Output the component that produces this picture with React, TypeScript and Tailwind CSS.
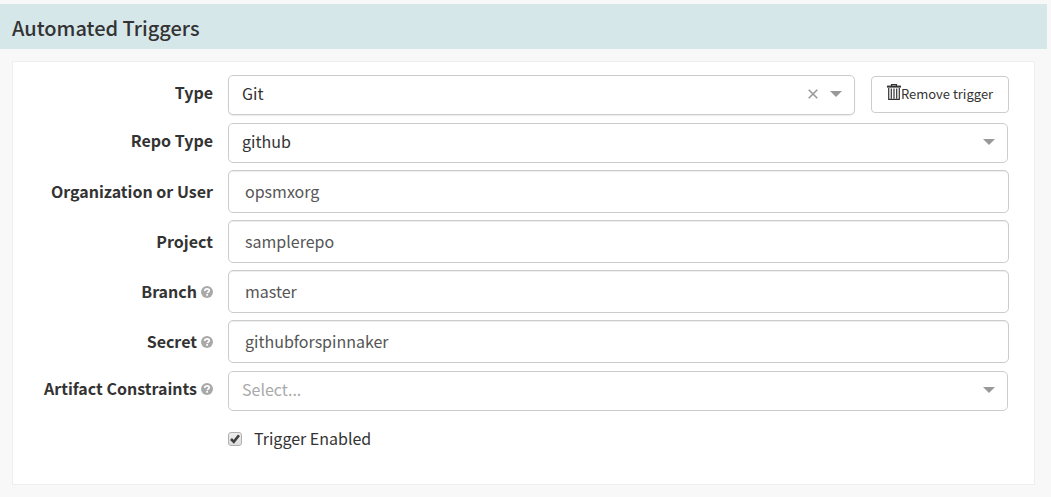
import React, { useState } from "react";

const fieldBox =
  "w-full rounded-[5px] border border-[#ccc] bg-white outline-none";

function HelpIcon() {
  return (
    <svg viewBox="0 0 12 12" className="mt-0.5 size-3 shrink-0" aria-hidden="true">
      <circle cx="6" cy="6" r="6" fill="#a9a9a9" />
      <path
        d="M3.7 4.9C3.7 3.4 4.7 2.8 6 2.8s2.3.6 2.3 1.8c0 1.3-1.9 1.3-1.9 2.7"
        fill="none"
        stroke="#fff"
        strokeWidth="1.7"
      />
      <rect x="5.2" y="8" width="1.8" height="1.7" fill="#fff" />
    </svg>
  );
}

function TrashIcon() {
  return (
    <svg viewBox="0 0 14 17" className="h-[17px] w-3.5 shrink-0" aria-hidden="true">
      <path d="M4.5 2V.6h5V2" fill="none" stroke="#333" strokeWidth="1.2" />
      <rect x="0" y="1.6" width="14" height="2" fill="#333" />
      <path
        d="M1.7 4v11.4h10.6V4M4.3 4.5v10M7 4.5v10M9.7 4.5v10"
        fill="none"
        stroke="#333"
        strokeWidth="1.2"
      />
    </svg>
  );
}

function Caret() {
  return (
    <svg
      viewBox="0 0 12 6"
      className="pointer-events-none absolute top-4 right-[13px] h-1.5 w-3"
      aria-hidden="true"
    >
      <path d="M0 0h12L6 6z" fill="#999" />
    </svg>
  );
}

function Row({
  id,
  label,
  help,
  children,
}: {
  id: string;
  label: string;
  help?: boolean;
  children: React.ReactNode;
}) {
  return (
    <div className="grid grid-cols-[200px_1fr] gap-[15px]">
      <label
        htmlFor={id}
        className="flex h-[34px] items-center justify-end gap-1 font-bold whitespace-nowrap"
      >
        {label}
        {help && <HelpIcon />}
      </label>
      {children}
    </div>
  );
}

function TextRow({
  id,
  label,
  help,
  initial,
}: {
  id: string;
  label: string;
  help?: boolean;
  initial: string;
}) {
  const [value, setValue] = useState(initial);
  return (
    <div className="-mt-px grid grid-cols-[200px_1fr] items-center gap-[15px]">
      <label
        htmlFor={id}
        className="flex items-center justify-end gap-1 pb-0.5 font-bold whitespace-nowrap"
      >
        {label}
        {help && <HelpIcon />}
      </label>
      <input
        id={id}
        type="text"
        value={value}
        onChange={(e) => setValue(e.target.value)}
        className={`${fieldBox} h-[43px] px-4 pb-0.5 text-[#555] shadow-[inset_0_1px_1px_rgba(0,0,0,0.075)]`}
      />
    </div>
  );
}

export default function App() {
  const [type, setType] = useState("Git");
  const [enabled, setEnabled] = useState(true);
  return (
    <div className="min-h-screen bg-[#f8f8f8] pt-1 pr-1 pb-3 font-['Noto_Sans_CJK_JP','Noto_Sans_CJK_SC',sans-serif] text-base leading-6 text-[#333]">
      <header className="flex h-[45px] items-center bg-[#d6e7ea] px-3 pt-0.5">
        <h2 className="text-xl leading-7 font-medium">Automated Triggers</h2>
      </header>
      <form className="mt-3 mr-3 ml-3 flex flex-col gap-2 border border-[#eee] bg-white pt-[13px] pr-[25px] pb-8">
        <Row id="type" label="Type">
          <div className="flex items-start gap-4">
            <div className="relative flex-1">
              <select
                id="type"
                value={type}
                onChange={(e) => setType(e.target.value)}
                className={`${fieldBox} h-10 appearance-none px-[13px] pb-1 shadow-[0_1px_1px_rgba(0,0,0,0.08)]`}
              >
                <option value=""></option>
                <option>Git</option>
              </select>
              <button
                type="button"
                aria-label="Clear type"
                onClick={() => setType("")}
                className="absolute top-3.5 right-[37px]"
              >
                <svg viewBox="0 0 10 10" className="size-2.5">
                  <path d="M.7.7l8.6 8.6M9.3.7L.7 9.3" stroke="#999" strokeWidth="1.6" />
                </svg>
              </button>
              <Caret />
            </div>
            <button
              type="button"
              className="mt-px flex h-[37px] w-[138px] items-center justify-center rounded-[4px] border border-[#ccc] bg-white pb-1 text-[13px] whitespace-nowrap"
            >
              <TrashIcon />
              <span className="pt-0.5">Remove trigger</span>
            </button>
          </div>
        </Row>
        <Row id="repo-type" label="Repo Type">
          <div className="relative mr-px">
            <select
              id="repo-type"
              defaultValue="github"
              className={`${fieldBox} h-10 appearance-none px-[13px] pb-1`}
            >
              <option>github</option>
            </select>
            <Caret />
          </div>
        </Row>
        <TextRow id="org" label="Organization or User" initial="opsmxorg" />
        <TextRow id="project" label="Project" initial="samplerepo" />
        <TextRow id="branch" label="Branch" help initial="master" />
        <TextRow id="secret" label="Secret" help initial="githubforspinnaker" />
        <Row id="constraints" label="Artifact Constraints" help>
          <div className="relative mr-px">
            <select
              id="constraints"
              defaultValue=""
              className={`${fieldBox} h-10 appearance-none px-[13px] pb-1 text-[#aaa]`}
            >
              <option value="">Select...</option>
            </select>
            <Caret />
          </div>
        </Row>
        <div className="mt-[7px] ml-[215px]">
          <label className="inline-flex items-center gap-3">
            <span className="relative flex size-3.5">
              <input
                type="checkbox"
                checked={enabled}
                onChange={(e) => setEnabled(e.target.checked)}
                className="size-3.5 appearance-none rounded-[3px] border border-[#b0b0b0] bg-linear-to-b from-[#eee] to-[#ddd]"
              />
              {enabled && (
                <svg
                  viewBox="0 0 14 14"
                  className="pointer-events-none absolute inset-0 size-3.5"
                  aria-hidden="true"
                >
                  <path
                    d="M3 7l2.8 2.8 5.2-6.6"
                    fill="none"
                    stroke="#404040"
                    strokeWidth="2.6"
                  />
                </svg>
              )}
            </span>
            <span className="pb-0.5">Trigger Enabled</span>
          </label>
        </div>
      </form>
    </div>
  );
}
